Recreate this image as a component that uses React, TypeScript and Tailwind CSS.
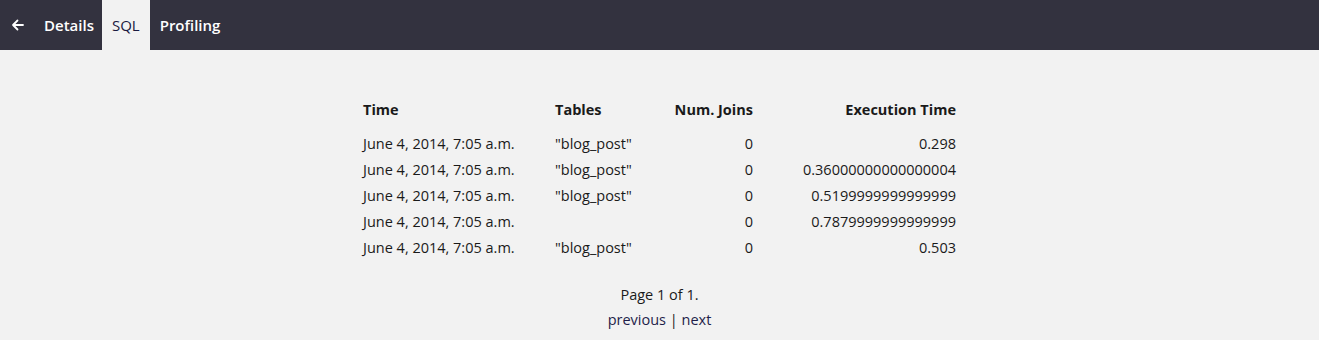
import React from "react";

const rows = [
  { t: "June 4, 2014, 7:05 a.m.", tb: '"blog_post"', j: "0", e: "0.298" },
  { t: "June 4, 2014, 7:05 a.m.", tb: '"blog_post"', j: "0", e: "0.36000000000000004" },
  { t: "June 4, 2014, 7:05 a.m.", tb: '"blog_post"', j: "0", e: "0.5199999999999999" },
  { t: "June 4, 2014, 7:05 a.m.", tb: "", j: "0", e: "0.7879999999999999" },
  { t: "June 4, 2014, 7:05 a.m.", tb: '"blog_post"', j: "0", e: "0.503" },
];

export default function App() {
  return (
    <div
      className="min-h-[340px] bg-[#f2f2f2] text-[#1a1a1a]"
      style={{ fontFamily: '"Open Sans", "Noto Sans", sans-serif' }}
    >
      <nav className="flex h-[50px] items-stretch bg-[#33323f] text-[15px] font-semibold text-white">
        <a className="flex items-center pl-[11px] pr-[13px]" href="#">
          <svg width="13" height="12" viewBox="0 0 13 12" fill="none" stroke="white" strokeWidth="1.8" strokeLinecap="round" strokeLinejoin="round">
            <path d="M12 6H2M6.5 1.5L2 6l4.5 4.5" />
          </svg>
        </a>
        <a className="flex items-center pl-[7px] pr-[8px]" href="#">Details</a>
        <a className="flex items-center bg-[#f2f2f2] px-[10px] font-normal text-[#1a1a40]" href="#">SQL</a>
        <a className="flex items-center px-[10px]" href="#">Profiling</a>
      </nav>
      <div className="flex flex-col items-center pt-[47px] text-[14.5px]">
        <table className="table-fixed border-collapse whitespace-nowrap">
          <colgroup>
            <col className="w-[192px]" />
            <col className="w-[110px]" />
            <col className="w-[88px]" />
            <col className="w-[203px]" />
          </colgroup>
          <thead>
            <tr className="h-[26px] font-bold">
              <th className="p-0 text-left">Time</th>
              <th className="p-0 text-left">Tables</th>
              <th className="p-0 text-right">Num. Joins</th>
              <th className="p-0 text-right">Execution Time</th>
            </tr>
          </thead>
          <tbody>
            <tr className="h-[8px]"><td colSpan={4} /></tr>
            {rows.map((r, i) => (
              <tr key={i} className="h-[26px]">
                <td className="p-0">{r.t}</td>
                <td className="p-0">{r.tb}</td>
                <td className="p-0 text-right">{r.j}</td>
                <td className="p-0 text-right">{r.e}</td>
              </tr>
            ))}
          </tbody>
        </table>
        <div className="mt-[21px] flex flex-col items-center leading-[25px]">
          <div>Page 1 of 1.</div>
          <div>
            <a href="#" className="text-[#1f1e4a]">previous</a> | <a href="#" className="text-[#1f1e4a]">next</a>
          </div>
        </div>
      </div>
    </div>
  );
}
